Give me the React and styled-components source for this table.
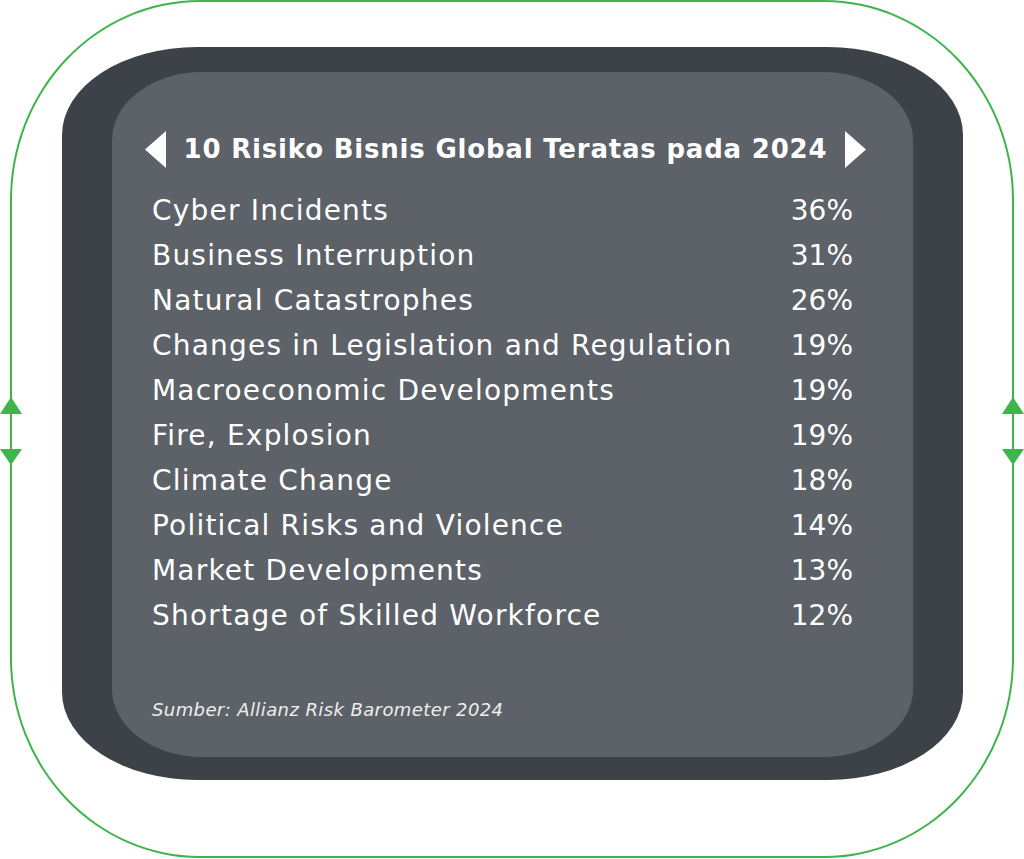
import React from "react";
import styled, { createGlobalStyle } from "styled-components";

const Global = createGlobalStyle`
  html, body { margin: 0; padding: 0; background: #ffffff; }
  body { font-family: "DejaVu Sans", "Liberation Sans", sans-serif; }
`;

const Page = styled.div`
  width: 1024px;
  height: 859px;
  box-sizing: border-box;
  padding: 0 10px 1px 10px;
  position: relative;
`;

const Outline = styled.div`
  position: relative;
  box-sizing: border-box;
  height: 100%;
  border: 2px solid #3cb54a;
  border-radius: 190px / 200px;
  padding: 45px 49px 76px 50px;
`;

const SideArrows = styled.div`
  position: absolute;
  top: 395px;
  ${(p) => (p.$side === "left" ? "left: -12px;" : "right: -12px;")}
  width: 22px;
  height: 68px;
`;

const DarkPanel = styled.div`
  box-sizing: border-box;
  height: 100%;
  background: #3d4249;
  border-radius: 135px / 88px;
  padding: 25px 50px 23px 50px;
`;

const InnerPanel = styled.div`
  box-sizing: border-box;
  height: 100%;
  background: #5d6268;
  border-radius: 90px / 68px;
  display: flex;
  flex-direction: column;
  color: #ffffff;
`;

const TitleRow = styled.div`
  display: flex;
  align-items: center;
  justify-content: space-between;
  margin-top: 57px;
  height: 40px;
  padding: 0 47px 0 33px;
`;

const Title = styled.h1`
  margin: 0;
  font-size: 26px;
  font-weight: 700;
  letter-spacing: 0.8px;
  line-height: 40px;
  white-space: nowrap;
`;

const List = styled.div`
  margin-top: 19px;
  padding: 0 60px 0 40px;
  display: flex;
  flex-direction: column;
`;

const Row = styled.div`
  display: flex;
  justify-content: space-between;
  align-items: center;
  height: 45px;
  font-size: 28px;
  font-weight: 400;
  letter-spacing: 1.2px;
  white-space: nowrap;
`;

const Pct = styled.span`
  letter-spacing: 0;
`;

const Source = styled.p`
  margin: 62px 0 0 40px;
  font-size: 18px;
  font-style: italic;
  letter-spacing: 0.4px;
  line-height: 20px;
  color: #eeeeee;
`;

const Tri = ({ dir }) => (
  <svg width="21" height="37" viewBox="0 0 21 37">
    {dir === "left" ? (
      <polygon points="21,0 21,37 0,18.5" fill="#ffffff" />
    ) : (
      <polygon points="0,0 0,37 21,18.5" fill="#ffffff" />
    )}
  </svg>
);

const GreenArrows = () => (
  <svg width="22" height="68" viewBox="0 0 22 68">
    <polygon points="11,0 22,17 0,17" fill="#3cb54a" />
    <polygon points="0,52 22,52 11,68" fill="#3cb54a" />
  </svg>
);

const risks = [
  ["Cyber Incidents", "36%"],
  ["Business Interruption", "31%"],
  ["Natural Catastrophes", "26%"],
  ["Changes in Legislation and Regulation", "19%"],
  ["Macroeconomic Developments", "19%"],
  ["Fire, Explosion", "19%"],
  ["Climate Change", "18%"],
  ["Political Risks and Violence", "14%"],
  ["Market Developments", "13%"],
  ["Shortage of Skilled Workforce", "12%"],
];

export default function App() {
  return (
    <>
      <Global />
      <Page>
        <Outline>
          <SideArrows $side="left">
            <GreenArrows />
          </SideArrows>
          <SideArrows $side="right">
            <GreenArrows />
          </SideArrows>
          <DarkPanel>
            <InnerPanel>
              <TitleRow>
                <Tri dir="left" />
                <Title>10 Risiko Bisnis Global Teratas pada 2024</Title>
                <Tri dir="right" />
              </TitleRow>
              <List>
                {risks.map(([name, pct]) => (
                  <Row key={name}>
                    <span>{name}</span>
                    <Pct>{pct}</Pct>
                  </Row>
                ))}
              </List>
              <Source>Sumber: Allianz Risk Barometer 2024</Source>
            </InnerPanel>
          </DarkPanel>
        </Outline>
      </Page>
    </>
  );
}
